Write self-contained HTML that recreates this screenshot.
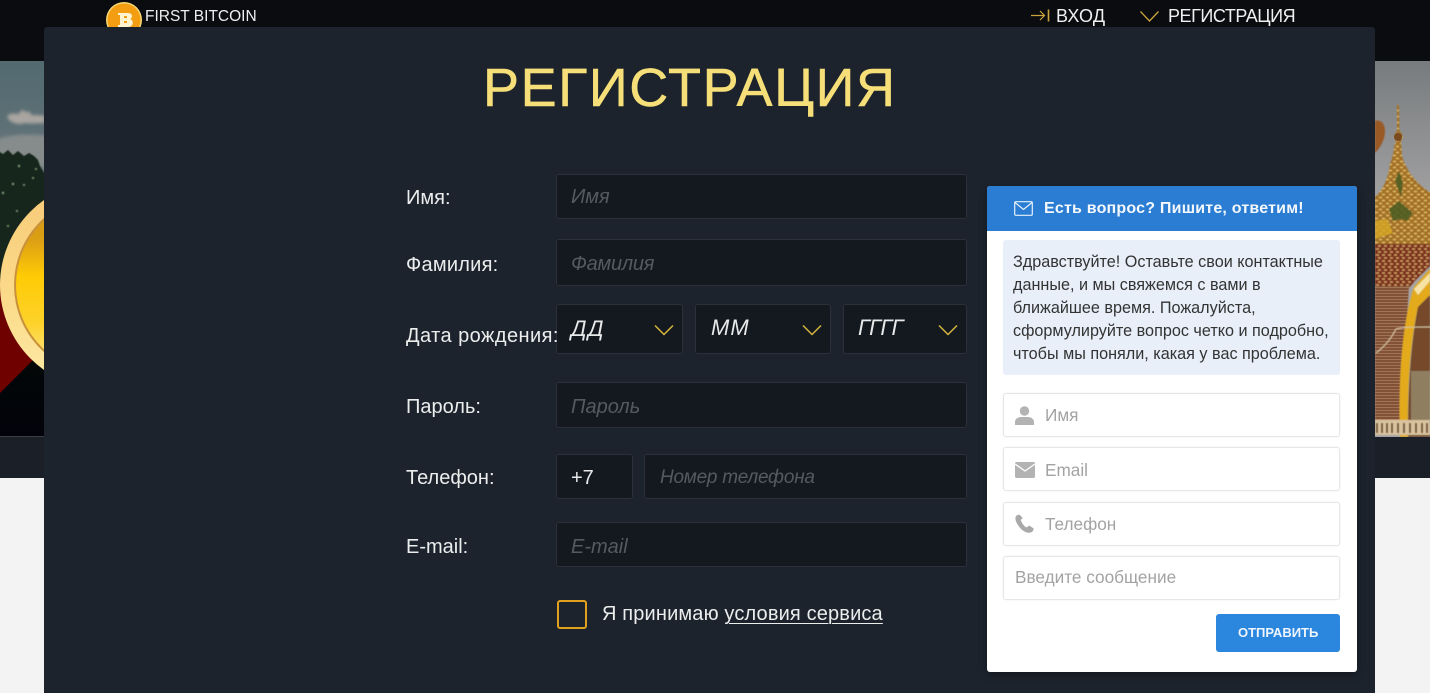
<!DOCTYPE html>
<html lang="ru"><head><meta charset="utf-8"><title>Регистрация</title>
<style>
html,body{margin:0;padding:0;width:1430px;height:693px;overflow:hidden;background:#f3f3f3}
body{position:relative;font-family:"Liberation Sans","DejaVu Sans",sans-serif}
.a{position:absolute}
.t{position:absolute;white-space:nowrap;line-height:24px;height:24px}
.f{position:absolute;box-sizing:border-box;background:#14181f;border:1px solid #2b303a;border-radius:3px}
.l{color:#eceded;font-size:20px}
.p{color:#565a60;font-size:20px;font-style:italic}
.v{color:#e8e9ea;font-size:22px;font-style:italic}
.w{position:absolute;box-sizing:border-box;background:#fff;border:1px solid #e6e6e6;border-radius:3px;left:1003px;width:337px;height:44px;box-shadow:0 0 2px rgba(0,0,0,.06)}
.q{color:#a3a3a3;font-size:17.2px}
.c{color:#333;font-size:16.2px;left:1013px}
</style></head><body>

<div class="a" style="left:0;top:0;width:1430px;height:61px;background:#0b0c0f"></div>
<div class="a" style="left:0;top:436px;width:1430px;height:42px;background:#1b1f27"></div>

<svg class="a" style="left:0;top:61px" width="44" height="376" viewBox="0 0 44 376">
<defs>
<filter id="bl"><feGaussianBlur stdDeviation="1.600"/></filter>
<filter id="bs"><feGaussianBlur stdDeviation=".5"/></filter>
<linearGradient id="s" x1="0" y1="0" x2="0" y2="1"><stop offset="0" stop-color="#526a70"/><stop offset=".55" stop-color="#5d7076"/><stop offset="1" stop-color="#7b8486"/></linearGradient>
<linearGradient id="g" x1="0" y1="0" x2="0" y2="1"><stop offset="0" stop-color="#cf9418"/><stop offset=".25" stop-color="#dca014"/><stop offset=".45" stop-color="#ffcb05"/><stop offset=".72" stop-color="#fdd22a"/><stop offset="1" stop-color="#fbe9a0"/></linearGradient>
<linearGradient id="r" x1="0" y1="0" x2="0" y2="1"><stop offset="0" stop-color="#f7c976"/><stop offset=".6" stop-color="#fbdc8c"/><stop offset="1" stop-color="#fdeaa6"/></linearGradient>
<linearGradient id="b" x1="0" y1="0" x2="0" y2="1"><stop offset="0" stop-color="#040b05"/><stop offset="1" stop-color="#02030a"/></linearGradient>
</defs>
<rect width="44" height="120" fill="url(#s)"/>
<g filter="url(#bl)">
<path d="M7 56c3-5 8-3 12-3 2-5 5-5 7-1 2-3 5-1 5 2 4 0 9 0 14 1v7c-6 0-14 1-20 0-6 2-14 1-18-6z" fill="#a9a5a0"/>
<path d="M-2 78c10-3 24-6 48-3v30H-2z" fill="#868c8c"/>
</g>
<g filter="url(#bs)">
<path d="M-2 90l5 3 5-4 5 5 5-4 6 5 5-3 5 3 4 4 2 6 5 8v120H-2z" fill="#13251a"/>
<g fill="#6d8a6a"><circle cx="19" cy="105" r="1.200"/><circle cx="13" cy="123" r="1.200"/><circle cx="3" cy="132" r="1.200"/><circle cx="24" cy="124" r="1"/><circle cx="33" cy="117" r="1"/><circle cx="17" cy="150" r="1"/><circle cx="36" cy="108" r="1"/><circle cx="8" cy="165" r="1"/></g>
</g>
<rect y="240" width="44" height="136" fill="url(#b)"/>
<path d="M0 225L44 225 44 288 0 332z" fill="#6f0101"/>
<rect y="375" width="44" height="1" fill="#3a3d44"/>
<circle cx="104" cy="224" r="104" fill="url(#r)"/>
<circle cx="104" cy="224" r="90" fill="#c9913a"/>
<circle cx="104" cy="224" r="88" fill="url(#g)"/>
</svg>

<svg class="a" style="left:1375px;top:61px" width="55" height="376" viewBox="0 0 55 376">
<defs>
<filter id="bd"><feGaussianBlur stdDeviation=".6"/></filter>
<linearGradient id="s2" x1="0" y1="0" x2="0" y2="1"><stop offset="0" stop-color="#777b7d"/><stop offset=".4" stop-color="#a5a4a5"/></linearGradient>
<pattern id="d" width="7" height="6" patternUnits="userSpaceOnUse"><rect width="7" height="6" fill="#a27026"/><path d="M0 1.500h3M4 4.500h3" stroke="#e2bd68" stroke-width="1.600"/></pattern>
<pattern id="e" width="6" height="6" patternUnits="userSpaceOnUse"><rect width="6" height="6" fill="#6f3420"/><path d="M0 1.500h6M0 4.500h6" stroke="#b98f68" stroke-width="1"/></pattern>
<pattern id="h" width="6" height="6" patternUnits="userSpaceOnUse"><rect width="6" height="6" fill="#7a2f1e"/><path d="M1 2h3M3 5h3" stroke="#d0a564" stroke-width="1.500"/></pattern>
</defs>
<rect width="55" height="376" fill="url(#s2)"/>
<g filter="url(#bd)">
<path d="M0 60c5-2 10 2 10 10 0 8-4 16-10 22z" fill="#9a5a28"/>
<path d="M22 44h2l.5 26 2 2 1.500 4-2 4 1 15c4 14 14 28 29 37v62H0V136c8-7 13-18 15-33 2-5 4-12 4-17l2-6-2-4 2-5h1z" fill="url(#d)"/>
<path d="M0 183h55v22c-8 8-15 14-21 22H0z" fill="url(#h)"/>
<path d="M14 148l10-8 14 12-6 8-6-2-8 2zM20 120l4-10 4 12-2 14z" fill="#4a5a25" opacity=".85"/>
<path d="M0 160l12-2 6 14-18 6z" fill="#d6a826" opacity=".8"/>
<path d="M0 225h34L25 373H0z" fill="url(#e)"/>
<path d="M25 376c-2-55 2-115 14-150l16-18v26l-12 12c-8 35-11 80-10 130z" fill="#e3aa1e"/>
<path d="M33 376c0-50 3-95 10-130l12-12v142z" fill="#75482a"/>
<path d="M43 234l12-14v-8l-16 16z" fill="#f7e4a5"/>
<path d="M36 310h19v50H36z" fill="#8f7f60"/>
<path d="M0 359h55v15H0z" fill="#d8c39e"/>
<path d="M2 362v10M7 362v10M12 362v10M17 362v10M23 362v10M29 362v10M35 362v10M41 362v10M47 362v10M52 362v10" stroke="#6a4526" stroke-width="1.800"/>
<path d="M1 292c8-6 15-14 20-24 6-2 20-2 34-2" stroke="#d7c7a4" stroke-width="1" fill="none"/>
</g>
<circle cx="23" cy="76" r="4" fill="#7a4a1e"/>
</svg>

<svg class="a" style="left:105px;top:0" width="38" height="28" viewBox="0 0 38 28">
<circle cx="19" cy="20" r="18" fill="#f7d774"/><circle cx="19" cy="20" r="16.500" fill="#f29d12"/>
<path d="M13 13h10c5 0 5 5 2 6 4 1 4 8-2 8H13v-2h2v-10h-2z" fill="#fff3d0"/><path d="M19 16h3v2h-3zM19 21h3v2h-3z" fill="#f29d12"/>
</svg>
<div class="t" style="left:145px;top:5px;color:#eee;font-size:15.500px">FIRST BITCOIN</div>

<svg class="a" style="left:1030px;top:8px" width="20" height="15" viewBox="0 0 20 15" fill="none" stroke="#c9a53c" stroke-width="1.200"><path d="M1 7.500h13M10 3l4.500 4.500L10 12"/><path d="M18.500 1.500v12" stroke-width="1.600"/></svg>
<div class="t" style="left:1056px;top:4px;color:#f0f0f0;font-size:18px;letter-spacing:.2px">ВХОД</div>
<svg class="a" style="left:1139px;top:9px" width="21" height="14" viewBox="0 0 21 14" fill="none" stroke="#c9a53c" stroke-width="1.300"><path d="M1.500 2.500L10.500 12 19.500 2.500"/></svg>
<div class="t" style="left:1168px;top:4px;color:#f0f0f0;font-size:18px;letter-spacing:-.45px">РЕГИСТРАЦИЯ</div>

<div class="a" style="left:44px;top:27px;width:1331px;height:670px;background:#1c232d;border-radius:3px"></div>

<div class="t" style="left:483px;top:64px;height:48px;line-height:48px;color:#f6df78;font-size:54px;letter-spacing:1.550px;-webkit-text-stroke:.5px #f6df78">РЕГИСТРАЦИЯ</div>

<div class="t l" style="left:406px;top:186px">Имя:</div>
<div class="t l" style="left:406px;top:253px;letter-spacing:.25px">Фамилия:</div>
<div class="t l" style="left:406px;top:395px">Пароль:</div>
<div class="t l" style="left:406px;top:466px">Телефон:</div>
<div class="t l" style="left:406px;top:535px">E-mail:</div>

<div class="f" style="left:556px;top:174px;width:411px;height:45px"></div>
<div class="t p" style="left:571px;top:185px">Имя</div>
<div class="f" style="left:556px;top:239px;width:411px;height:47px"></div>
<div class="t p" style="left:571px;top:252px;letter-spacing:-.25px">Фамилия</div>

<div class="f" style="left:556px;top:304px;width:127px;height:50px"></div>
<div class="t v" style="left:571px;top:317px;letter-spacing:1.500px">ДД</div>
<div class="f" style="left:695px;top:304px;width:136px;height:50px"></div>
<div class="t v" style="left:711px;top:316px;letter-spacing:1px">ММ</div>
<div class="f" style="left:843px;top:304px;width:124px;height:50px"></div>
<div class="t v" style="left:858px;top:316px;letter-spacing:-.8px">ГГГГ</div>
<svg class="a" style="left:654px;top:324px" width="20" height="12" fill="none" stroke="#d7b53e" stroke-width="1.500"><path d="M1 1.500L10 10.500 19 1.500"/></svg>
<svg class="a" style="left:802px;top:324px" width="20" height="12" fill="none" stroke="#d7b53e" stroke-width="1.500"><path d="M1 1.500L10 10.500 19 1.500"/></svg>
<svg class="a" style="left:938px;top:324px" width="20" height="12" fill="none" stroke="#d7b53e" stroke-width="1.500"><path d="M1 1.500L10 10.500 19 1.500"/></svg>
<div class="t l" style="left:406px;top:324px;letter-spacing:.45px">Дата рождения:</div>

<div class="f" style="left:556px;top:382px;width:411px;height:46px"></div>
<div class="t p" style="left:571px;top:395px">Пароль</div>
<div class="f" style="left:556px;top:454px;width:77px;height:45px"></div>
<div class="t" style="left:571px;top:466px;color:#e8e9ea;font-size:20px">+7</div>
<div class="f" style="left:644px;top:454px;width:323px;height:45px"></div>
<div class="t p" style="left:660px;top:466px;font-size:19px;letter-spacing:-.25px">Номер телефона</div>
<div class="f" style="left:556px;top:522px;width:411px;height:45px"></div>
<div class="t p" style="left:571px;top:535px">E-mail</div>

<div class="a" style="left:557px;top:600px;width:30px;height:29px;box-sizing:border-box;border:2px solid #e0a21c;border-radius:3px"></div>
<div class="t l" style="left:602px;top:602px;letter-spacing:.15px">Я принимаю <span style="text-decoration:underline;text-underline-offset:3px;text-decoration-thickness:1px">условия сервиса</span></div>

<div class="a" style="left:987px;top:186px;width:370px;height:486px;background:#fff;border-radius:3px;box-shadow:0 2px 8px rgba(0,0,0,.35)"></div>
<div class="a" style="left:987px;top:186px;width:370px;height:45px;background:#2a7dd3;border-radius:3px 3px 0 0"></div>
<svg class="a" style="left:1014px;top:201px" width="19" height="15" viewBox="0 0 19 15" fill="none" stroke="#e6f1fb" stroke-width="1.200"><rect x=".7" y=".7" width="17.600" height="13.600" rx="1"/><path d="M1 1.500L9.500 8.500 18 1.500"/></svg>
<div class="t" style="left:1044px;top:197px;color:#f4f8fc;font-size:16px;font-weight:bold;letter-spacing:.21px">Есть вопрос? Пишите, ответим!</div>

<div class="a" style="left:1003px;top:240px;width:337px;height:135px;background:#e8eff9;border-radius:3px"></div>
<div class="t c" style="top:250px">Здравствуйте! Оставьте свои контактные</div>
<div class="t c" style="top:273px">данные, и мы свяжемся с вами в</div>
<div class="t c" style="top:296px">ближайшее время. Пожалуйста,</div>
<div class="t c" style="top:319px">сформулируйте вопрос четко и подробно,</div>
<div class="t c" style="top:342px">чтобы мы поняли, какая у вас проблема.</div>

<div class="w" style="top:393px"></div>
<svg class="a" style="left:1015px;top:406px" width="19" height="19" viewBox="0 0 19 19" fill="#b3b3b3"><circle cx="9.500" cy="5" r="4.700"/><path d="M0 19v-3c0-3 3-5 6-5h7c3 0 6 2 6 5v3z"/></svg>
<div class="t q" style="left:1045px;top:403px">Имя</div>

<div class="w" style="top:447px"></div>
<svg class="a" style="left:1015px;top:462px" width="20" height="16" viewBox="0 0 20 16"><rect width="20" height="16" rx="1.500" fill="#b3b3b3"/><path d="M0 2l10 7 10-7" fill="none" stroke="#fff" stroke-width="1.300"/></svg>
<div class="t q" style="left:1045px;top:458px">Email</div>

<div class="w" style="top:502px"></div>
<svg class="a" style="left:1015px;top:514px" width="19" height="19" viewBox="0 0 19 19" fill="#a9a9a9"><path d="M4.500 0.500L1.500 1.500C0 3 0 6 2 9.500c2.500 4.500 6 8 10 9 2 .5 4 .5 6-1.500l.7-2.500-4.500-3-2.500 2c-2.500-1-5-4.500-6-7.500l2-2z"/></svg>
<div class="t q" style="left:1045px;top:512px">Телефон</div>

<div class="w" style="top:556px"></div>
<div class="t q" style="left:1015px;top:565px">Введите сообщение</div>

<div class="a" style="left:1216px;top:614px;width:124px;height:38px;background:#2b86de;border-radius:3px"></div>
<div class="t" style="left:1238px;top:621px;color:#eef5fc;font-size:13px;font-weight:bold">ОТПРАВИТЬ</div>

</body></html>
